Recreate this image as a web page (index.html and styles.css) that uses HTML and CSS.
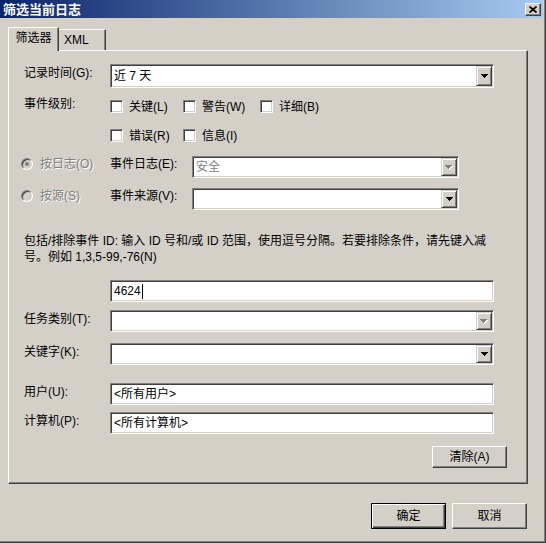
FILE: index.html
```html
<!DOCTYPE html>
<html lang="zh-CN">
<head>
<meta charset="utf-8">
<title>筛选当前日志</title>
<link rel="stylesheet" href="styles.css">
</head>
<body>
<div class="window">
  <div class="titlebar">
    <span class="title">筛选当前日志</span>
    <span class="close"><svg width="8" height="7" viewBox="0 0 8 7"><path d="M0.5 0.5 L7.5 6.5 M7.5 0.5 L0.5 6.5" stroke="#000" stroke-width="1.7" fill="none"/></svg></span>
  </div>
  <div class="content">
    <div class="tabs">
      <div class="tab active">筛选器</div>
      <div class="tab">XML</div>
    </div>
    <div class="panel">
      <div class="row r-time">
        <span class="lbl">记录时间(G):</span>
        <div class="combo wide tall"><span class="val">近 7 天</span><span class="drop"><svg width="7" height="4" viewBox="0 0 7 4" shape-rendering="crispEdges"><path d="M0 0h7v1h-1v1h-1v1h-1v1h-1v-1h-1v-1h-1v-1h-1z" fill="#000"/></svg></span></div>
      </div>
      <div class="row r-level">
        <span class="lbl lvl">事件级别:</span>
        <div class="checks">
          <span class="chk"><i class="box"></i>关键(L)</span>
          <span class="chk"><i class="box"></i>警告(W)</span>
          <span class="chk"><i class="box"></i>详细(B)</span>
          <span class="chk"><i class="box"></i>错误(R)</span>
          <span class="chk"><i class="box"></i>信息(I)</span>
        </div>
      </div>
      <div class="row r-log">
        <span class="radio-lbl disabled"><i class="radio checked"></i>按日志(O)</span>
        <span class="lbl2">事件日志(E):</span>
        <div class="combo mid"><span class="val disabled-val">安全</span><span class="drop"><svg width="8" height="5" viewBox="0 0 8 5" shape-rendering="crispEdges"><path d="M1 1h7v1h-1v1h-1v1h-1v1h-1v-1h-1v-1h-1v-1h-1z" fill="#fff"/><path d="M0 0h7v1h-1v1h-1v1h-1v1h-1v-1h-1v-1h-1v-1h-1z" fill="#808080"/></svg></span></div>
      </div>
      <div class="row r-src">
        <span class="radio-lbl disabled"><i class="radio"></i>按源(S)</span>
        <span class="lbl2">事件来源(V):</span>
        <div class="combo mid"><span class="val"></span><span class="drop"><svg width="7" height="4" viewBox="0 0 7 4" shape-rendering="crispEdges"><path d="M0 0h7v1h-1v1h-1v1h-1v1h-1v-1h-1v-1h-1v-1h-1z" fill="#000"/></svg></span></div>
      </div>
      <p class="para">包括/排除事件 ID: 输入 ID 号和/或 ID 范围，使用逗号分隔。若要排除条件，请先键入减<br>号。例如 1,3,5-99,-76(N)</p>
      <div class="row r-id">
        <div class="field wide"><span class="val">4624<i class="caret"></i></span></div>
      </div>
      <div class="row r-task">
        <span class="lbl">任务类别(T):</span>
        <div class="combo wide"><span class="val"></span><span class="drop"><svg width="8" height="5" viewBox="0 0 8 5" shape-rendering="crispEdges"><path d="M1 1h7v1h-1v1h-1v1h-1v1h-1v-1h-1v-1h-1v-1h-1z" fill="#fff"/><path d="M0 0h7v1h-1v1h-1v1h-1v1h-1v-1h-1v-1h-1v-1h-1z" fill="#808080"/></svg></span></div>
      </div>
      <div class="row r-key">
        <span class="lbl">关键字(K):</span>
        <div class="combo wide"><span class="val"></span><span class="drop"><svg width="7" height="4" viewBox="0 0 7 4" shape-rendering="crispEdges"><path d="M0 0h7v1h-1v1h-1v1h-1v1h-1v-1h-1v-1h-1v-1h-1z" fill="#000"/></svg></span></div>
      </div>
      <div class="row r-user">
        <span class="lbl">用户(U):</span>
        <div class="field wide"><span class="val">&lt;所有用户&gt;</span></div>
      </div>
      <div class="row r-comp">
        <span class="lbl">计算机(P):</span>
        <div class="field wide"><span class="val">&lt;所有计算机&gt;</span></div>
      </div>
      <div class="row r-clear">
        <span class="btn">清除(A)</span>
      </div>
    </div>
    <div class="footer">
      <span class="btn default">确定</span>
      <span class="btn">取消</span>
    </div>
  </div>
</div>
</body>
</html>
```

FILE: styles.css
```css
* { box-sizing: border-box; }
html, body { margin: 0; padding: 0; }
body {
  width: 546px;
  height: 543px;
  overflow: hidden;
  background: #d4d0c8;
  font-family: "Liberation Sans", "Noto Sans CJK SC", sans-serif;
  font-size: 12px;
  line-height: 16px;
  color: #000;
}
.window {
  width: 546px;
  height: 543px;
  background: #d4d0c8;
  border-right: 1px solid #404040;
  border-bottom: 1px solid #404040;
  box-shadow: inset -1px -1px #808080;
  display: flex;
  flex-direction: column;
}
.titlebar {
  height: 18px;
  margin-right: 2px;
  background: linear-gradient(to right, #0a246a, #a6caf0);
  display: flex;
  align-items: flex-start;
  justify-content: space-between;
  padding: 0 2px 0 3px;
  flex: none;
}
.title {
  color: #fff;
  font-weight: bold;
  font-size: 13px;
  line-height: 18px;
  font-family: "Noto Sans CJK SC", sans-serif;
}
.close {
  margin-top: 3px;
  width: 16px;
  height: 13px;
  background: #d4d0c8;
  border: 1px solid;
  border-color: #fff #404040 #404040 #fff;
  box-shadow: inset -1px -1px #808080;
  display: flex;
  align-items: center;
  justify-content: center;
}
.close svg { display: block; }
.content {
  flex: 1;
  padding: 9px 17px 0 8px;
  display: flex;
  flex-direction: column;
}
.tabs {
  display: flex;
  align-items: flex-end;
  height: 23px;
  flex: none;
}
.tab {
  height: 21px;
  width: 47px;
  padding-left: 5px;
  border-top: 1px solid #fff;
  border-right: 1px solid #404040;
  box-shadow: inset -1px 0 #808080;
  line-height: 21px;
  white-space: nowrap;
}
.tab.active {
  height: 24px;
  width: 51px;
  padding-left: 0;
  margin-bottom: -1px;
  border-left: 1px solid #fff;
  text-align: center;
  position: relative;
  z-index: 1;
  background: #d4d0c8;
}
.panel {
  height: 434px;
  flex: none;
  border-top: 1px solid #fff;
  border-left: 1px solid #fff;
  border-right: 1px solid #404040;
  border-bottom: 1px solid #404040;
  box-shadow: inset -1px -1px #808080;
  padding: 13px 20px 0 15px;
}
.row {
  display: flex;
  align-items: flex-start;
}
.lbl {
  width: 86px;
  flex: none;
  padding-top: 1px;
  white-space: nowrap;
}
.lbl2 {
  width: 82px;
  flex: none;
  white-space: nowrap;
}
.sunken, .combo, .field {
  border: 1px solid;
  border-color: #808080 #fff #fff #808080;
  box-shadow: inset 1px 1px #404040, inset -1px -1px #d4d0c8;
  padding: 1px;
  background: #fff;
}
.combo, .field {
  height: 22px;
  display: flex;
  align-items: stretch;
}
.combo.tall { height: 24px; }
.wide { width: 384px; }
.mid { width: 267px; }
.val {
  flex: 1;
  display: flex;
  align-items: center;
  padding-left: 2px;
  white-space: nowrap;
}
.disabled-val { color: #808080; }
.drop {
  width: 16px;
  flex: none;
  background: #d4d0c8;
  border: 1px solid;
  border-color: #d4d0c8 #404040 #404040 #d4d0c8;
  box-shadow: inset 1px 1px #fff, inset -1px -1px #808080;
  display: flex;
  align-items: center;
  justify-content: center;
}
.drop svg { display: block; }
.caret {
  display: inline-block;
  width: 1px;
  height: 15px;
  background: #000;
  margin-left: 1px;
}
.r-level { margin-top: 11px; }
.lvl { margin-top: -4px; }
.checks {
  display: grid;
  grid-template-columns: 73px 77px auto;
  grid-auto-rows: 15px;
  row-gap: 14px;
}
.chk {
  display: flex;
  align-items: center;
  gap: 6px;
  white-space: nowrap;
}
.box {
  width: 13px;
  height: 13px;
  flex: none;
  background: #fff;
  border: 1px solid;
  border-color: #808080 #fff #fff #808080;
  box-shadow: inset 1px 1px #404040, inset -1px -1px #d4d0c8;
}
.r-log { margin-top: 13px; }
.r-src { margin-top: 10px; }
.radio-lbl {
  width: 89px;
  margin-left: -3px;
  flex: none;
  display: flex;
  align-items: center;
  gap: 7px;
  height: 16px;
  white-space: nowrap;
}
.disabled {
  color: #808080;
  text-shadow: 1px 1px #fff;
}
.radio {
  width: 12px;
  height: 12px;
  flex: none;
  border-radius: 50%;
  border: 1px solid;
  border-color: #808080 #fff #fff #808080;
  box-shadow: inset 1px 1px #404040, inset -1px -1px #d4d0c8;
  background: #d4d0c8;
  display: flex;
  align-items: center;
  justify-content: center;
}
.radio.checked::after {
  content: "";
  width: 4px;
  height: 4px;
  border-radius: 50%;
  background: #808080;
}
.para {
  margin: 23px 0 0;
  white-space: nowrap;
  line-height: 16px;
}
.r-id { margin-top: 15px; padding-left: 86px; }
.r-task { margin-top: 8px; }
.r-key { margin-top: 11px; }
.r-user { margin-top: 18px; }
.r-comp { margin-top: 7px; }
.r-clear { margin-top: 12px; justify-content: flex-end; }
.btn {
  width: 75px;
  height: 22px;
  display: flex;
  align-items: center;
  justify-content: center;
  background: #d4d0c8;
  border: 1px solid;
  border-color: #fff #404040 #404040 #fff;
  box-shadow: inset -1px -1px #808080;
  white-space: nowrap;
}
.footer {
  display: flex;
  justify-content: flex-end;
  gap: 6px;
  margin-top: 19px;
  margin-right: 1px;
}
.footer .btn { height: 26px; }
.btn.default {
  border: 1px solid #000;
  box-shadow: inset 1px 1px #fff, inset -1px -1px #404040, inset -2px -2px #808080;
}
```
